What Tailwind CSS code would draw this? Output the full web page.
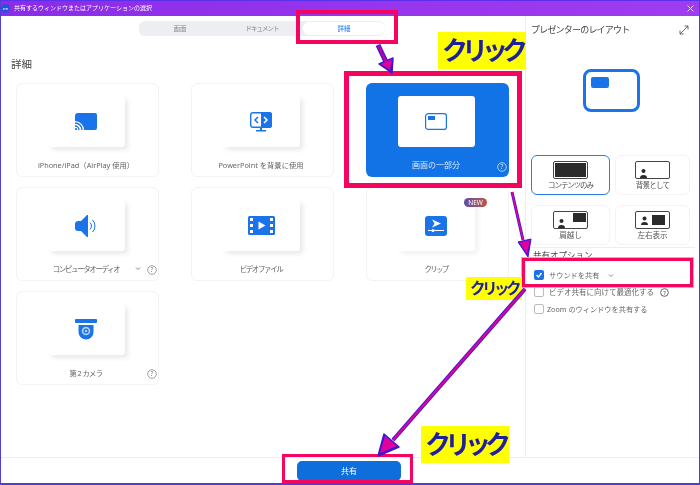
<!doctype html>
<html lang="ja"><head><meta charset="utf-8"><script src="https://cdn.jsdelivr.net/npm/@tailwindcss/browser@4"></script></head>
<body class="m-0">
<div class="relative w-[700px] h-[485px] overflow-hidden bg-white flex flex-col border-x border-[#4f3fd0] font-['Noto_Sans','Noto_Sans_CJK_JP',sans-serif] text-[#666] blur-[0.35px]">
  <!-- title bar -->
  <div class="h-[16px] shrink-0 flex items-center justify-between border-t border-[#5a30e8] bg-gradient-to-r from-[#8a2ce8] to-[#a03cf0] text-white text-[6px]">
    <div class="flex items-center gap-1">
      <div class="w-[9px] h-[9px] rounded-full bg-[#2a4fe0] text-[4px] flex items-center justify-center">zm</div>
      <span>共有するウィンドウまたはアプリケーションの選択</span>
    </div>
    <svg class="mr-[4px]" width="9" height="9" viewBox="0 0 9 9" fill="none" stroke="#e8d0ff" stroke-width="1"><path d="M1.500 1.500l6 6M7.500 1.500l-6 6"/></svg>
  </div>
  <div class="flex flex-1 min-h-0">
    <!-- left pane -->
    <div class="w-[525px] shrink-0 border-r border-[#eeeeee] flex flex-col">
      <div class="self-start ml-[138px] mt-[5px] h-[15px] w-[246px] rounded-[6px] bg-[#eceef2] flex text-[6.5px] items-center text-[#888]">
        <div class="w-[82px] text-center">画面</div>
        <div class="w-[82px] text-center tracking-[-1px]">ドキュメント</div>
        <div class="w-[82px] h-[13px] rounded-[6px] bg-white text-[#1a73e8] flex items-center justify-center">詳細</div>
      </div>
      <div class="ml-[10px] mt-[21px] text-[10.5px] leading-[15px] text-[#444]">詳細</div>
      <div class="ml-[15px] mt-[11px] grid grid-cols-[143px_143px_143px] auto-rows-[94px] gap-x-[32px] gap-y-[10px] text-[7.3px]">
        <!-- iPhone -->
        <div class="rounded-[6px] border border-[#f3f3f3] flex flex-col items-center pt-[12px] pr-[3px]">
          <div class="w-[77px] h-[51px] rounded-[3px] bg-white shadow-[3px_3px_5px_rgba(0,0,0,0.09)] flex items-center justify-center">
            <svg width="22" height="17" viewBox="0 0 22 17"><path d="M3 0h17a2 2 0 0 1 2 2v13a2 2 0 0 1-2 2H9A9 9 0 0 0 0 8V3a3 3 0 0 1 3-3z" fill="#1a73e8"/><path d="M0 10a7 7 0 0 1 7 7M0 13a4 4 0 0 1 4 4" fill="none" stroke="#1a73e8" stroke-width="1.400"/><circle cx="1" cy="16" r="1.100" fill="#1a73e8"/></svg>
          </div>
          <div class="mt-[12px] leading-[12px]">iPhone/iPad（AirPlay 使用）</div>
        </div>
        <!-- PowerPoint -->
        <div class="rounded-[6px] border border-[#f3f3f3] flex flex-col items-center pt-[12px] pr-[3px]">
          <div class="w-[77px] h-[51px] rounded-[3px] bg-white shadow-[3px_3px_5px_rgba(0,0,0,0.09)] flex items-center justify-center">
            <svg width="22" height="20" viewBox="0 0 22 20"><rect x="0.700" y="0.700" width="20.600" height="14.600" rx="2" fill="#fff" stroke="#1a73e8" stroke-width="1.400"/><path d="M11 0h8a3 3 0 0 1 3 3v10a3 3 0 0 1-3 3h-8z" fill="#1a73e8"/><path d="M8 5L5 8l3 3" fill="none" stroke="#1a73e8" stroke-width="1.500"/><path d="M14 5l3 3-3 3" fill="none" stroke="#fff" stroke-width="1.500"/><path d="M10 16h2v2h4v1.500H6V18h4z" fill="#1a73e8"/></svg>
          </div>
          <div class="mt-[12px] leading-[12px]">PowerPoint を背景に使用</div>
        </div>
        <!-- portion -->
        <div class="relative rounded-[6px] bg-[#1273e6] flex flex-col items-center pt-[13px] pr-[3px] text-[#d8e8fc]">
          <div class="w-[77px] h-[51px] rounded-[3px] bg-white flex items-center justify-center">
            <svg width="22" height="17" viewBox="0 0 22 17"><rect x="0.600" y="0.600" width="20.800" height="15.800" rx="2.500" fill="#fff" stroke="#1a73e8" stroke-width="1.200"/><rect x="3" y="3" width="7" height="4" fill="#1a73e8"/></svg>
          </div>
          <div class="mt-[12px] leading-[12px] text-[8px]">画面の一部分</div>
          <svg class="absolute right-[2px] bottom-[5px]" width="10" height="10" viewBox="0 0 10 10"><circle cx="5" cy="5" r="4.300" fill="none" stroke="#d8e8fc" stroke-width=".8"/><text x="5" y="7.300" font-size="6.500" text-anchor="middle" fill="#d8e8fc">?</text></svg>
        </div>
        <!-- audio -->
        <div class="relative rounded-[6px] border border-[#f3f3f3] flex flex-col items-center pt-[12px] pr-[3px]">
          <div class="w-[77px] h-[51px] rounded-[3px] bg-white shadow-[3px_3px_5px_rgba(0,0,0,0.09)] flex items-center justify-center">
            <svg width="22" height="22" viewBox="0 0 22 22"><path d="M0 8.500A3 3 0 0 1 3 6h3l6-6h1v22h-1l-6-6H3a3 3 0 0 1-3-3z" fill="#1a73e8"/><path d="M15 7.500a5 5 0 0 1 0 7M17.500 5a8.500 8.500 0 0 1 0 12" fill="none" stroke="#1a73e8" stroke-width="1"/></svg>
          </div>
          <div class="mt-[12px] leading-[12px] text-[7.5px] tracking-[-1.4px]">コンピュータオーディオ</div>
          <svg class="absolute right-[17px] bottom-[9px]" width="6" height="5" viewBox="0 0 6 5" fill="none" stroke="#777" stroke-width=".9"><path d="M1 1.500l2 2 2-2"/></svg>
          <svg class="absolute right-[1px] bottom-[5px]" width="10" height="10" viewBox="0 0 10 10"><circle cx="5" cy="5" r="4.300" fill="none" stroke="#888" stroke-width=".8"/><text x="5" y="7.300" font-size="6.500" text-anchor="middle" fill="#888">?</text></svg>
        </div>
        <!-- video -->
        <div class="rounded-[6px] border border-[#f3f3f3] flex flex-col items-center pt-[12px] pr-[3px]">
          <div class="w-[77px] h-[51px] rounded-[3px] bg-white shadow-[3px_3px_5px_rgba(0,0,0,0.09)] flex items-center justify-center">
            <svg width="27" height="19" viewBox="0 0 27 19"><rect width="27" height="19" rx="1.500" fill="#1a73e8"/><g fill="#fff"><rect x="2" y="2" width="3" height="3"/><rect x="2" y="8" width="3" height="3"/><rect x="2" y="14" width="3" height="3"/><rect x="22" y="2" width="3" height="3"/><rect x="22" y="8" width="3" height="3"/><rect x="22" y="14" width="3" height="3"/><path d="M10.500 5.500l7 4-7 4z"/></g></svg>
          </div>
          <div class="mt-[12px] leading-[12px] text-[7.5px] tracking-[-1.4px]">ビデオファイル</div>
        </div>
        <!-- clip -->
        <div class="relative rounded-[6px] border border-[#f3f3f3] flex flex-col items-center pt-[12px] pr-[3px]">
          <div class="w-[77px] h-[51px] rounded-[3px] bg-white shadow-[3px_3px_5px_rgba(0,0,0,0.06)] flex items-center justify-center">
            <svg width="22" height="20" viewBox="0 0 22 20"><rect width="22" height="20" rx="3" fill="#1a73e8"/><path d="M7 3.500l9 4-9 4 2.500-4z" fill="#fff"/><path d="M3 14.500h16" stroke="#fff" stroke-width="1"/><circle cx="8" cy="14.500" r="1.500" fill="#fff"/></svg>
          </div>
          <div class="mt-[12px] leading-[12px] text-[7.5px] tracking-[-1.8px]">クリップ</div>
          <div class="absolute left-[97px] top-[10px] w-[23px] h-[9px] rounded-full bg-gradient-to-r from-[#5a4aa8] to-[#c0503a] text-white text-[6.500px] leading-[9px] text-center">NEW</div>
        </div>
        <!-- camera -->
        <div class="relative rounded-[6px] border border-[#f3f3f3] flex flex-col items-center pt-[12px] pr-[3px]">
          <div class="w-[77px] h-[51px] rounded-[3px] bg-white shadow-[3px_3px_5px_rgba(0,0,0,0.09)] flex items-center justify-center">
            <svg width="22" height="21" viewBox="0 0 22 21"><rect width="22" height="4" rx="1" fill="#1a73e8"/><path d="M3.500 6h15v7a7.500 7.500 0 0 1-15 0z" fill="#1a73e8"/><circle cx="11" cy="12" r="4.300" fill="#a9cdf6"/><circle cx="11" cy="12" r="2.600" fill="#1a73e8"/><circle cx="11" cy="12" r="1.300" fill="#a9cdf6"/></svg>
          </div>
          <div class="mt-[12px] leading-[12px] tracking-[-0.6px]">第 2 カメラ</div>
          <svg class="absolute right-[1px] bottom-[5px]" width="10" height="10" viewBox="0 0 10 10"><circle cx="5" cy="5" r="4.300" fill="none" stroke="#888" stroke-width=".8"/><text x="5" y="7.300" font-size="6.500" text-anchor="middle" fill="#888">?</text></svg>
        </div>
      </div>
    </div>
    <!-- right pane -->
    <div class="flex-1 flex flex-col pl-[5px] pr-[9px]">
      <div class="mt-[6px] flex items-center justify-between h-[15px]">
        <span class="text-[9px] tracking-[-0.8px] text-[#444]">プレゼンターのレイアウト</span>
        <svg class="mr-[1px]" width="10" height="10" viewBox="0 0 10 10" fill="none" stroke="#444" stroke-width=".8"><path d="M1 9l8-8M5.500 1H9v3.500M1 5.500V9h3.500"/></svg>
      </div>
      <div class="mt-[32px] ml-[52px] w-[57px] h-[43px] rounded-[8px] border-[3px] border-[#1a73e8] pt-[5px] pl-[5px]">
        <div class="w-[18px] h-[11px] rounded-[2px] bg-[#1a73e8]"></div>
      </div>
      <div class="mt-[43px] grid grid-cols-[79px_75px] auto-rows-[40px] gap-x-[5px] gap-y-[10px] text-[7.500px] text-[#555]">
        <div class="rounded-[6px] border border-[#2a80e0] flex flex-col items-center pt-[5px]">
          <div class="w-[35px] h-[18px] rounded-[2px] border border-[#444] p-[1px]"><div class="w-full h-full bg-[#2b2b2b]"></div></div>
          <div class="leading-[12px] tracking-[-1.100px]">コンテンツのみ</div>
        </div>
        <div class="rounded-[6px] border border-[#f3f3f3] flex flex-col items-center pt-[5px]">
          <div class="relative w-[35px] h-[18px] rounded-[2px] border border-[#444]"><div class="absolute left-[4px] bottom-0 w-[7px] h-[10px]"><svg width="7" height="10" viewBox="0 0 7 10"><circle cx="3.500" cy="3" r="2" fill="#2b2b2b"/><path d="M0 10a3.500 3 0 0 1 7 0z" fill="#2b2b2b"/></svg></div></div>
          <div class="leading-[12px] tracking-[-0.800px]">背景として</div>
        </div>
        <div class="rounded-[6px] border border-[#f3f3f3] flex flex-col items-center pt-[5px]">
          <div class="relative w-[35px] h-[18px] rounded-[2px] border border-[#444]"><div class="absolute left-[4px] bottom-0 w-[7px] h-[10px]"><svg width="7" height="10" viewBox="0 0 7 10"><circle cx="3.500" cy="3" r="2" fill="#2b2b2b"/><path d="M0 10a3.500 3 0 0 1 7 0z" fill="#2b2b2b"/></svg></div><div class="absolute right-[1px] top-[1px] w-[13px] h-[9px] bg-[#2b2b2b]"></div></div>
          <div class="leading-[12px]">肩越し</div>
        </div>
        <div class="rounded-[6px] border border-[#f3f3f3] flex flex-col items-center pt-[5px]">
          <div class="w-[35px] h-[18px] rounded-[2px] border border-[#444] flex items-center justify-between pl-[5px] pr-[4px]"><svg width="7" height="9" viewBox="0 0 7 9"><circle cx="3.500" cy="2.500" r="2" fill="#2b2b2b"/><path d="M0 9a3.500 3 0 0 1 7 0z" fill="#2b2b2b"/></svg><div class="w-[13px] h-[10px] bg-[#2b2b2b]"></div></div>
          <div class="leading-[12px]">左右表示</div>
        </div>
      </div>
      <div class="mt-[2px] -mx-[5px] border-t border-[#eeeeee] h-0"></div>
      <div class="text-[8.500px] leading-[13px] text-[#444] ml-[2px]">共有オプション</div>
      <div class="mt-[9px] ml-[3px] flex flex-col gap-[7px] text-[7.200px] leading-[10px] text-[#666]">
        <div class="flex items-center h-[10px]">
          <div class="w-[10px] h-[10px] rounded-[2px] bg-[#1a73e8] flex items-center justify-center mr-[5px]"><svg width="8" height="8" viewBox="0 0 8 8" fill="none" stroke="#fff" stroke-width="1.300"><path d="M1.500 4l2 2 3-4"/></svg></div>
          <span>サウンドを共有</span>
          <svg class="ml-[9px]" width="6" height="5" viewBox="0 0 6 5" fill="none" stroke="#777" stroke-width=".9"><path d="M1 1.500l2 2 2-2"/></svg>
        </div>
        <div class="flex items-center h-[10px]">
          <div class="w-[10px] h-[10px] rounded-[2px] border border-[#bbb] mr-[5px]"></div>
          <span class="text-[7.500px]">ビデオ共有に向けて最適化する</span>
          <svg class="ml-[6px]" width="9" height="9" viewBox="0 0 10 10"><circle cx="5" cy="5" r="4.300" fill="none" stroke="#444" stroke-width=".9"/><text x="5" y="7.300" font-size="6.500" text-anchor="middle" fill="#444">?</text></svg>
        </div>
        <div class="flex items-center h-[10px]">
          <div class="w-[10px] h-[10px] rounded-[2px] border border-[#bbb] mr-[3px]"></div>
          <span>Zoom のウィンドウを共有する</span>
        </div>
      </div>
    </div>
  </div>
  <!-- footer -->
  <div class="h-[28px] shrink-0 border-t border-b-2 border-t-[#eeeeee] border-b-[#4f3fd0] flex justify-center pt-[3px] pr-[2px]">
    <div class="w-[104px] h-[20px] rounded-[5px] bg-[#0e6fdc] text-white text-[8px] flex items-center justify-center">共有</div>
  </div>

  <!-- annotations -->
  <div class="absolute left-[295px] top-[10px] w-[102px] h-[34px] border-[4px] border-[#f5055f]"></div>
  <div class="absolute left-[343px] top-[71px] w-[178px] h-[117px] border-[5px] border-[#f5055f]"></div>
  <div class="absolute left-[521px] top-[258px] w-[171px] h-[29px] border-[3px] border-[#f5055f] outline outline-1 outline-[#ffc000]"></div>
  <div class="absolute left-[281px] top-[454px] w-[131px] h-[29px] border-[3px] border-[#f5055f]"></div>

  <div class="absolute left-[437px] top-[32px] w-[88px] h-[37px] bg-[#ffff00] text-[#20209c] font-bold text-[26px] tracking-[-6px] leading-[36px] text-center whitespace-nowrap">クリック</div>
  <div class="absolute left-[465px] top-[277px] w-[56px] h-[23px] bg-[#ffff00] text-[#20209c] font-bold text-[15.500px] tracking-[-3.500px] leading-[23px] text-center whitespace-nowrap">クリック</div>
  <div class="absolute left-[420px] top-[426px] w-[88px] h-[37px] bg-[#ffff00] text-[#20209c] font-bold text-[26px] tracking-[-6px] leading-[36px] text-center whitespace-nowrap">クリック</div>

  <svg class="absolute left-0 top-0" width="700" height="485" viewBox="0 0 700 485">
    <g stroke="#3a18d0" fill="#3a18d0" stroke-linejoin="round">
      <path d="M377 45L386 64" stroke-width="5"/><path d="M391 73L378 64L392 58Z" stroke-width="1.500"/>
      <path d="M511 192L522 240" stroke-width="3"/><path d="M527 257L517 242L530 239Z" stroke-width="1"/>
      <path d="M524 289L392 440" stroke-width="4"/><path d="M377 456L383 434L398 447Z" stroke-width="1.500"/>
    </g>
    <g stroke="#c000a8" fill="#e000a0" stroke-linejoin="round">
      <path d="M377 45L386 64" stroke-width="2.500"/><path d="M389 70L380 64L391 59Z" stroke-width="0"/>
      <path d="M511 192L522 240" stroke-width="1.500" stroke="#e000a0"/><path d="M526 254L518.500 242.500L529 240Z" stroke-width="0"/>
      <path d="M524 289L392 440" stroke-width="2" stroke="#e000a0"/><path d="M379 453L384 436L396 446Z" stroke-width="0"/>
    </g>
  </svg>
</div>
</body></html>
